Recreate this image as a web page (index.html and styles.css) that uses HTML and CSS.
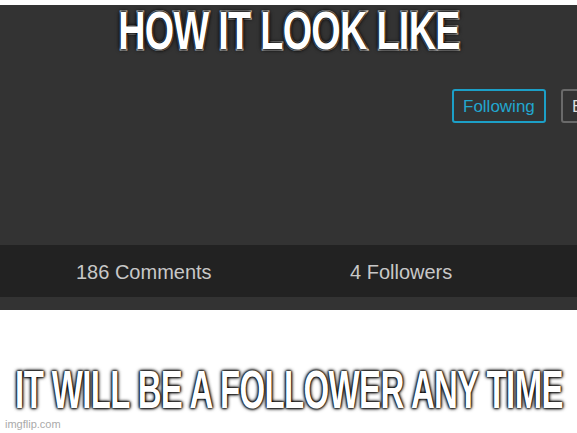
FILE: index.html
```html
<!doctype html>
<html lang="en">
<head>
  <meta charset="UTF-8">
  <meta name="viewport" content="width=device-width, initial-scale=1.0">
  <title>How it look like</title>
  <link rel="stylesheet" href="styles.css">
</head>
<body>
  <div class="meme">
    <div class="profile">
      <div class="caption caption-top">
        <span class="caption-text top-text">HOW IT LOOK LIKE</span>
      </div>
      <div class="actions">
        <div class="btn btn-follow">Following</div>
        <div class="btn btn-edit">Edit</div>
      </div>
      <div class="stats">
        <div class="stat">186 Comments</div>
        <div class="stat">4 Followers</div>
      </div>
    </div>
    <div class="caption caption-bottom">
      <span class="caption-text bottom-text">IT WILL BE A FOLLOWER ANY TIME</span>
    </div>
    <div class="watermark">imgflip.com</div>
  </div>
</body>
</html>
```

FILE: styles.css
```css
body {
    margin: 0;
    background: #fff;
    font-family: "Liberation Sans", Arial, sans-serif;
}

.meme {
    width: 577px;
    height: 433px;
    overflow: hidden;
    padding-top: 5px;
    box-sizing: border-box;
    position: relative;
}

.profile {
    position: relative;
    height: 305px;
    background: #333;
    display: flex;
    flex-direction: column;
}

/* meme captions */
.caption {
    display: flex;
    justify-content: center;
    white-space: nowrap;
}

.caption-top {
    position: absolute;
    top: 0;
    left: 0;
    right: 0;
}

.caption-text {
    display: inline-block;
    color: #fff;
    font-weight: bold;
    font-size: 54px;
    line-height: 50px;
    letter-spacing: -1px;
    -webkit-text-stroke: 3px #fff;
    paint-order: stroke fill;
    text-shadow: 0 0 2px #000, 0 0 3px #000, 0 0 4px #000, 0 0 6px #000;
}

.top-text {
    transform: scaleX(0.7);
}

.bottom-text {
    transform: scaleX(0.61);
}

.caption-bottom {
    margin-top: 54px;
}

.watermark {
    padding-left: 5px;
    margin-top: 4px;
    font-size: 11px;
    color: #aaa;
}

/* follow buttons */
.actions {
    display: flex;
    gap: 15px;
    padding-left: 452px;
    margin-top: 84px;
    overflow: hidden;
}

.btn {
    flex: none;
    height: 34px;
    box-sizing: border-box;
    padding: 0 9px;
    display: flex;
    align-items: center;
    border-radius: 3px;
    font-size: 17px;
    padding-top: 2px;
}

.btn-follow {
    width: 94px;
    border: 2px solid #1c9fc7;
    color: #22a6cf;
}

.btn-edit {
    border: 2px solid #6a6a6a;
    color: #ddd;
}

/* comment / follower counts */
.stats {
    margin-top: auto;
    margin-bottom: 13px;
    height: 52px;
    background: #222;
    display: grid;
    grid-template-columns: 274px auto;
    align-items: center;
    padding-left: 76px;
    padding-top: 2px;
    box-sizing: border-box;
}

.stat {
    font-size: 20px;
    color: #c8c8c8;
}
```
